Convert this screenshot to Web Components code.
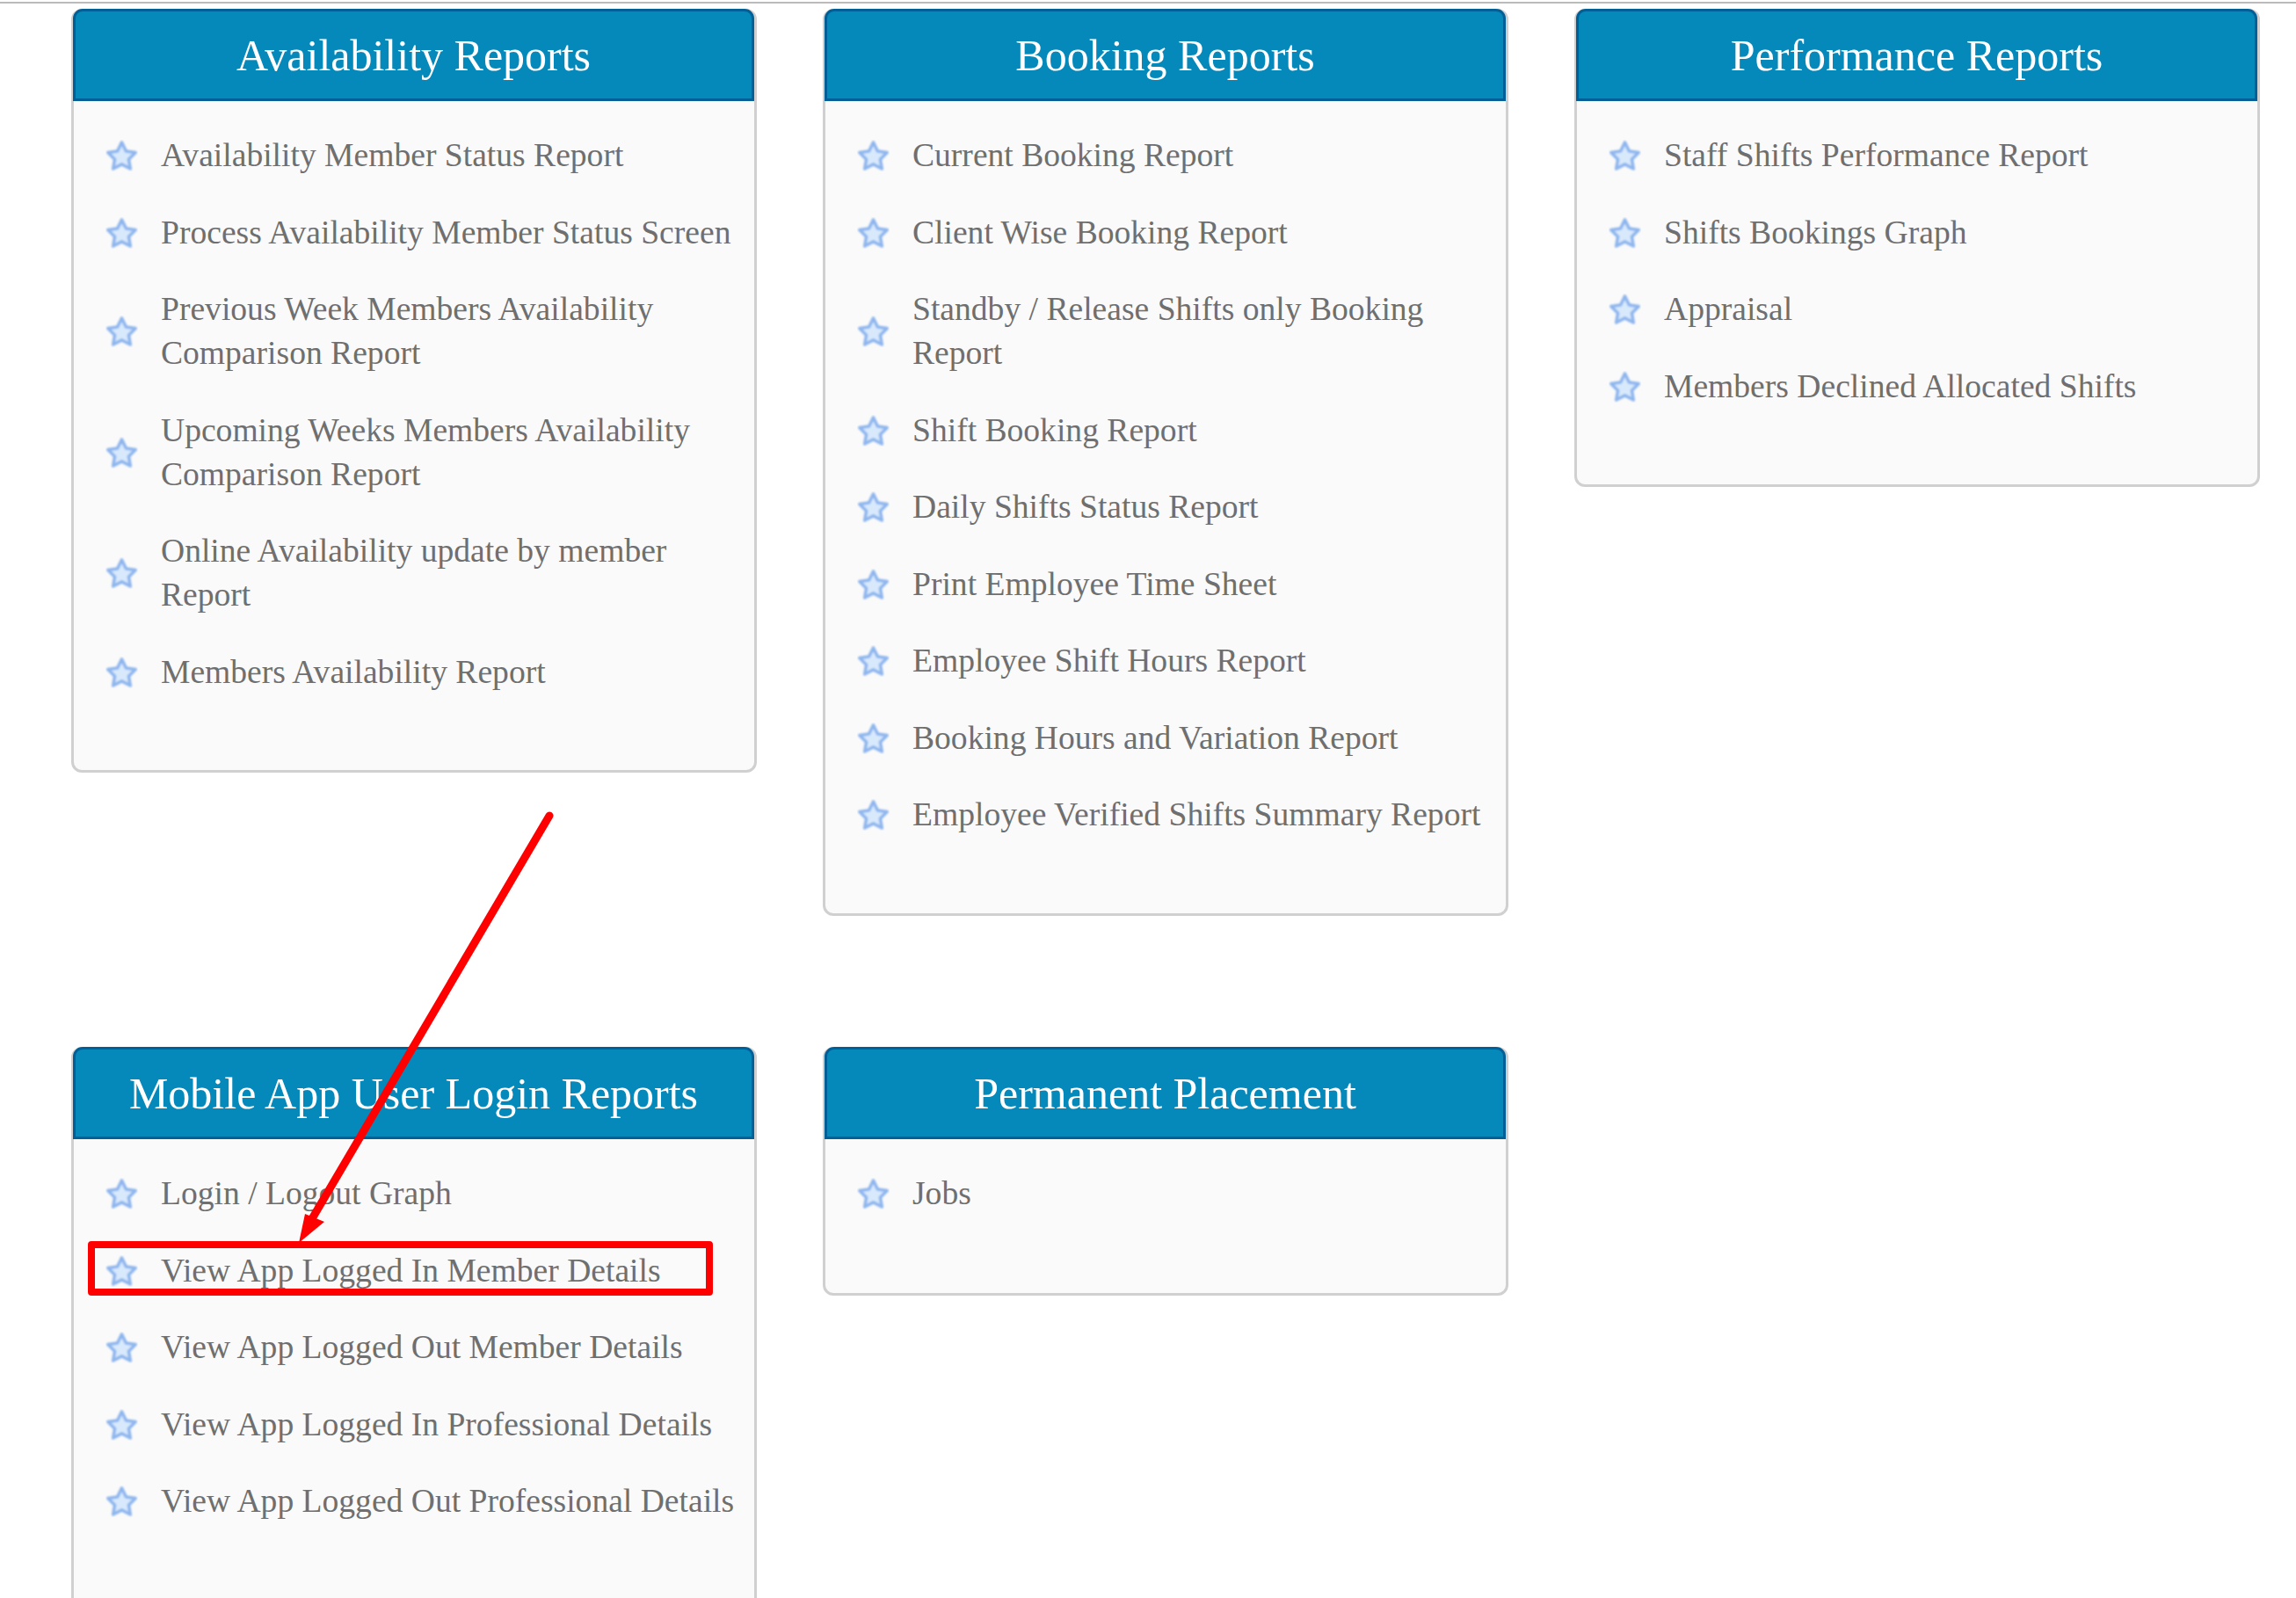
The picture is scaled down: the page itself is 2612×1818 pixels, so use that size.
<!DOCTYPE html>
<html>
<head>
<meta charset="utf-8">
<title>Reports</title>
<style>
    html, body { height: 100%; overflow: hidden; }
    body { margin: 0; background: #fff; font-family: "Liberation Serif", serif; }
</style>
</head>
<body>
<report-page>
    <report-card heading="Availability Reports" style="height:869px">
        <report-item>Availability Member Status Report</report-item>
        <report-item>Process Availability Member Status Screen</report-item>
        <report-item>Previous Week Members Availability Comparison Report</report-item>
        <report-item>Upcoming Weeks Members Availability Comparison Report</report-item>
        <report-item>Online Availability update by member Report</report-item>
        <report-item>Members Availability Report</report-item>
    </report-card>
    <report-card heading="Booking Reports" style="height:1032px">
        <report-item>Current Booking Report</report-item>
        <report-item>Client Wise Booking Report</report-item>
        <report-item>Standby / Release Shifts only Booking Report</report-item>
        <report-item>Shift Booking Report</report-item>
        <report-item>Daily Shifts Status Report</report-item>
        <report-item>Print Employee Time Sheet</report-item>
        <report-item>Employee Shift Hours Report</report-item>
        <report-item>Booking Hours and Variation Report</report-item>
        <report-item>Employee Verified Shifts Summary Report</report-item>
    </report-card>
    <report-card heading="Performance Reports" style="height:544px">
        <report-item>Staff Shifts Performance Report</report-item>
        <report-item>Shifts Bookings Graph</report-item>
        <report-item>Appraisal</report-item>
        <report-item>Members Declined Allocated Shifts</report-item>
    </report-card>
    <report-card heading="Mobile App User Login Reports" style="height:700px">
        <report-item>Login / Logout Graph</report-item>
        <report-item>View App Logged In Member Details</report-item>
        <report-item>View App Logged Out Member Details</report-item>
        <report-item>View App Logged In Professional Details</report-item>
        <report-item>View App Logged Out Professional Details</report-item>
    </report-card>
    <report-card heading="Permanent Placement" style="height:283px">
        <report-item>Jobs</report-item>
    </report-card>
</report-page>
<report-callout></report-callout>

<script>
class ReportPage extends HTMLElement {
    constructor() {
        super();
        this._shadowRoot = this.attachShadow({mode: 'open'});
    }

    connectedCallback() {
        this._shadowRoot.innerHTML = `
            <style>
                :host {
                    display: block;
                    box-sizing: border-box;
                    height: 1816px;
                    overflow: hidden;
                    border-top: 2px solid #bbb;
                    margin-top: 2px;
                    padding: 6px 41px 0 81px;
                }
                .grid {
                    display: grid;
                    grid-template-columns: repeat(3, 780px);
                    column-gap: 75px;
                    grid-auto-rows: 1181px;
                    align-items: start;
                }
            </style>
            <div class="grid"><slot></slot></div>
        `;
    }
}

class ReportCard extends HTMLElement {
    constructor() {
        super();
        this._shadowRoot = this.attachShadow({mode: 'open'});
    }

    connectedCallback() {
        this._shadowRoot.innerHTML = `
            <style>
                :host {
                    display: flex;
                    flex-direction: column;
                    box-sizing: border-box;
                    background: #fafafa;
                    border: 3px solid #d0d0d0;
                    border-radius: 12px;
                }
                h2 {
                    margin: -3px 0 0 -1px;
                    height: 105px;
                    box-sizing: border-box;
                    display: flex;
                    align-items: center;
                    justify-content: center;
                    background: #0588ba;
                    border: 3px solid #005f96;
                    border-radius: 11px 11px 0 0;
                    color: #fff;
                    font: normal 50px "Liberation Serif", serif;
                }
                .items {
                    display: flex;
                    flex-direction: column;
                    gap: 37.5px;
                    padding: 37px 0 0 36px;
                }
            </style>
            <h2>${this.getAttribute('heading')}</h2>
            <div class="items"><slot></slot></div>
        `;
    }
}

class ReportItem extends HTMLElement {
    constructor() {
        super();
        this._shadowRoot = this.attachShadow({mode: 'open'});
    }

    connectedCallback() {
        this._shadowRoot.innerHTML = `
            <style>
                :host {
                    display: flex;
                    align-items: center;
                    gap: 26px;
                    padding-right: 20px;
                    color: #6f6f6f;
                    font: 37.6px/50px "Liberation Serif", serif;
                }
                svg { flex: none; width: 37px; height: 36px; }
            </style>
            <svg viewBox="0 0 37 36">
                <defs><filter id="soft" x="-10%" y="-10%" width="120%" height="120%"><feGaussianBlur stdDeviation="0.9"/></filter></defs>
                <path filter="url(#soft)" d="M18.5 3 L23.4 13 L34.2 14.5 L26.4 22.2 L28.3 33 L18.5 27.9 L8.7 33 L10.6 22.2 L2.8 14.5 L13.6 13 Z"
                      fill="#d8e9fc" stroke="#8db5ee" stroke-width="3.6" stroke-linejoin="round"/>
            </svg>
            <span><slot></slot></span>
        `;
    }
}

// red annotation drawn over the screenshot
class ReportCallout extends HTMLElement {
    constructor() {
        super();
        this._shadowRoot = this.attachShadow({mode: 'open'});
    }

    connectedCallback() {
        this._shadowRoot.innerHTML = `
            <style>
                :host { position: absolute; left: 0; top: 0; width: 2612px; height: 1818px; pointer-events: none; }
                svg { display: block; }
            </style>
            <svg width="2612" height="1818" viewBox="0 0 2612 1818">
                <rect x="104" y="1416" width="703" height="54" fill="none" stroke="#ff0000" stroke-width="8" stroke-linejoin="round"/>
                <path d="M625 928 L350 1395" fill="none" stroke="#ff0000" stroke-width="9" stroke-linecap="round"/>
                <path d="M340 1414 L347 1381 L369 1390 Z" fill="#ff0000"/>
            </svg>
        `;
    }
}

window.customElements.define('report-page', ReportPage);
window.customElements.define('report-card', ReportCard);
window.customElements.define('report-item', ReportItem);
window.customElements.define('report-callout', ReportCallout);
</script>
</body>
</html>
